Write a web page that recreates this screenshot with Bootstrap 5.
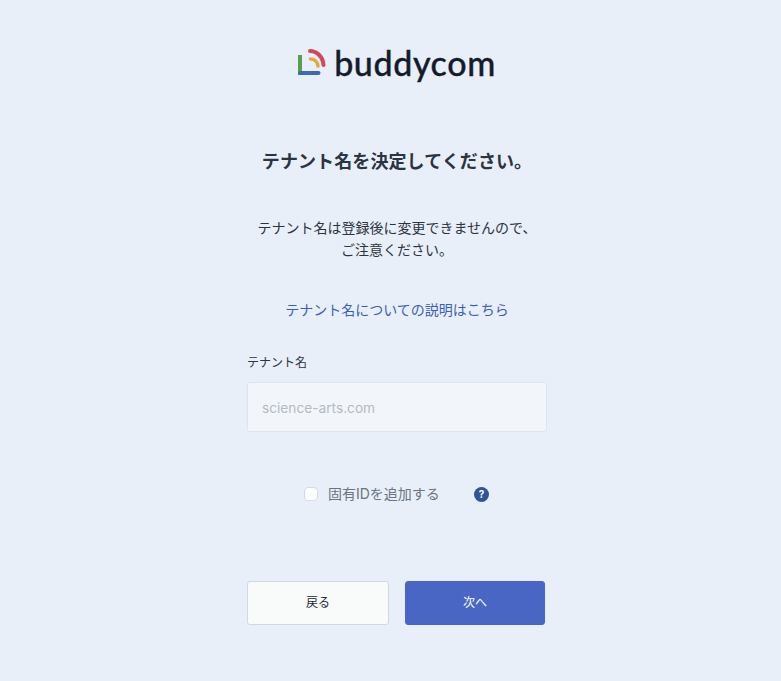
<!DOCTYPE html>
<html lang="ja">
<head>
<meta charset="utf-8">
<title>Buddycom</title>
<link href="https://cdn.jsdelivr.net/npm/bootstrap@5.3.0/dist/css/bootstrap.min.css" rel="stylesheet">
<style>
html,body{height:100%;}
body{background:#e8eff9;font-family:Inter,"Noto Sans CJK JP",sans-serif;color:#212b36;overflow:hidden;}
.page-col{width:300px;margin-left:247px;}
.logo-wrap{height:46px;margin-top:40px;width:300px;gap:8px;}
.logo-text{font-family:Lato,sans-serif;font-weight:500;font-size:34px;line-height:46px;color:#141c2b;letter-spacing:.6px;-webkit-text-stroke:.35px #141c2b;}
.ttl{font-size:18px;font-weight:700;line-height:26px;margin:63px 0 0;color:#2b3440;letter-spacing:.1px;}
.desc{font-size:14px;line-height:22px;margin:42px 0 0;color:#2b3440;}
.more{display:block;font-size:14px;line-height:22px;margin-top:38px;color:#3a5fb8;text-decoration:none;}
.fld-label{font-size:12px;line-height:18px;margin:33px 0 10px;color:#2b3440;}
.fld-input{height:50px;background:#f2f6fb;border:1px solid #dde5f0;border-radius:3px;padding:1px 14px 0;font-size:13.7px;color:#2b3440;}
.fld-input::placeholder{color:#b4bac2;}
.fld-input:focus{background:#f2f6fb;}
.chk-row{margin-top:52px;height:20px;padding-left:57px;}
.chk-box{width:14px;height:14px;margin:0 10px 0 0;background:#fff;border:1px solid #d3dae4;border-radius:1px;flex:none;}
.chk-label{font-size:14px;line-height:20px;color:#6b7480;width:146px;}
.help-dot{width:15px;height:15px;border-radius:50%;background:#2f5597;color:#fff;font-size:10px;font-weight:700;line-height:15px;text-align:center;flex:none;}
.btn-row{margin-top:77px;gap:16px;}
.act-btn{width:142px;height:44px;font-size:12px;line-height:1;border-radius:3px;padding:0;}
.act-back{background:#f9fafa;border:1px solid #cfd8e6;color:#212b36;}
.act-next{width:140px;background:#4a66c4;border:1px solid #4a66c4;color:#fff;}
.act-next:hover{background:#4a66c4;border-color:#4a66c4;color:#fff;}
</style>
</head>
<body>
<div class="page-col">
  <div class="logo-wrap d-flex align-items-center justify-content-center">
    <svg width="28" height="30" viewBox="0 0 28 30" class="flex-shrink-0" aria-hidden="true">
      <path d="M2 7V27" fill="none" stroke="#5a9e4b" stroke-width="4"/>
      <path d="M2 25H20.500" fill="none" stroke="#3d6bb3" stroke-width="4" stroke-linecap="round"/>
      <path d="M12 3C19 3 25 9 25.500 17" fill="none" stroke="#d2495a" stroke-width="4" stroke-linecap="round"/>
      <path d="M12.500 11C16.500 11 19.500 14 20 18" fill="none" stroke="#e5a93c" stroke-width="3.600" stroke-linecap="round"/>
    </svg>
    <span class="logo-text">buddycom</span>
  </div>
  <h1 class="ttl text-center">テナント名を決定してください。</h1>
  <p class="desc text-center">テナント名は登録後に変更できませんので、<br>ご注意ください。</p>
  <a href="#" class="more text-center">テナント名についての説明はこちら</a>
  <div class="fld-label">テナント名</div>
  <input type="text" class="form-control fld-input shadow-none" placeholder="science-arts.com">
  <div class="chk-row d-flex align-items-center">
    <input type="checkbox" class="form-check-input chk-box" id="uid">
    <label class="chk-label" for="uid">固有IDを追加する</label>
    <span class="help-dot">?</span>
  </div>
  <div class="btn-row d-flex">
    <button type="button" class="btn act-btn act-back">戻る</button>
    <button type="button" class="btn act-btn act-next">次へ</button>
  </div>
</div>
</body>
</html>
